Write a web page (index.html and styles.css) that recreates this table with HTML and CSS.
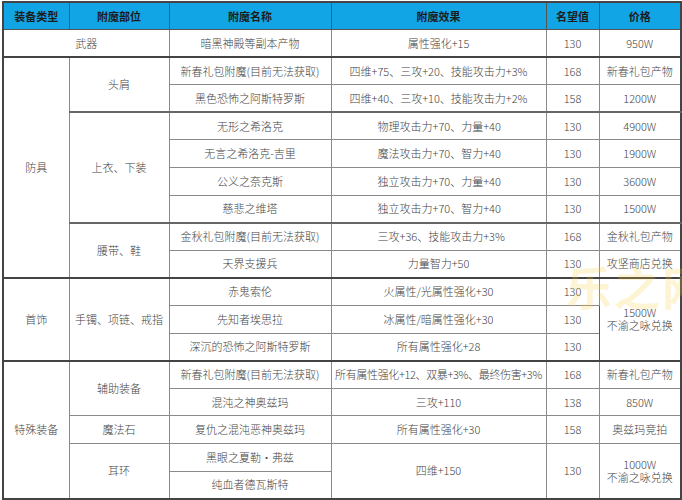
FILE: index.html
```html
<!DOCTYPE html>
<html>
<head>
<meta charset="utf-8">
<link rel="stylesheet" href="styles.css">
</head>
<body>
<div class="wrap">
<table class="tbl">
  <colgroup>
    <col class="c1"><col class="c2"><col class="c3"><col class="c4"><col class="c5"><col class="c6">
  </colgroup>
  <thead>
    <tr class="head">
      <th>装备类型</th><th>附魔部位</th><th>附魔名称</th><th>附魔效果</th><th>名望值</th><th>价格</th>
    </tr>
  </thead>
  <tbody>
    <tr>
      <td colspan="2">武器</td><td>暗黑神殿等副本产物</td><td>属性强化+15</td><td>130</td><td>950W</td>
    </tr>
    <tr class="grp">
      <td rowspan="8">防具</td><td rowspan="2">头肩</td><td>新春礼包附魔(目前无法获取)</td><td>四维+75、三攻+20、技能攻击力+3%</td><td>168</td><td>新春礼包产物</td>
    </tr>
    <tr>
      <td>黑色恐怖之阿斯特罗斯</td><td>四维+40、三攻+10、技能攻击力+2%</td><td>158</td><td>1200W</td>
    </tr>
    <tr class="sub">
      <td rowspan="4">上衣、下装</td><td>无形之希洛克</td><td class="left">物理攻击力+70、力量+40</td><td>130</td><td>4900W</td>
    </tr>
    <tr>
      <td>无言之希洛克-吉里</td><td class="left">魔法攻击力+70、智力+40</td><td>130</td><td>1900W</td>
    </tr>
    <tr>
      <td>公义之奈克斯</td><td class="left">独立攻击力+70、力量+40</td><td>130</td><td>3600W</td>
    </tr>
    <tr>
      <td>慈悲之维塔</td><td class="left">独立攻击力+70、智力+40</td><td>130</td><td>1500W</td>
    </tr>
    <tr class="sub">
      <td rowspan="2">腰带、鞋</td><td>金秋礼包附魔(目前无法获取)</td><td class="left">三攻+36、技能攻击力+3%</td><td>168</td><td>金秋礼包产物</td>
    </tr>
    <tr>
      <td>天界支援兵</td><td>力量智力+50</td><td>130</td><td>攻坚商店兑换</td>
    </tr>
    <tr class="grp">
      <td rowspan="3">首饰</td><td rowspan="3">手镯、项链、戒指</td><td>赤鬼索伦</td><td>火属性/光属性强化+30</td><td>130</td><td rowspan="3" class="two">1500W<br>不渝之咏兑换</td>
    </tr>
    <tr>
      <td>先知者埃思拉</td><td>冰属性/暗属性强化+30</td><td>130</td>
    </tr>
    <tr>
      <td>深沉的恐怖之阿斯特罗斯</td><td>所有属性强化+28</td><td>130</td>
    </tr>
    <tr class="grp">
      <td rowspan="5">特殊装备</td><td rowspan="2">辅助装备</td><td>新春礼包附魔(目前无法获取)</td><td class="tight">所有属性强化+12、双暴+3%、最终伤害+3%</td><td>168</td><td>新春礼包产物</td>
    </tr>
    <tr>
      <td>混沌之神奥兹玛</td><td>三攻+110</td><td>138</td><td>850W</td>
    </tr>
    <tr>
      <td>魔法石</td><td>复仇之混沌恶神奥兹玛</td><td>所有属性强化+30</td><td>158</td><td>奥兹玛竞拍</td>
    </tr>
    <tr>
      <td rowspan="2">耳环</td><td>黑眼之夏勒・弗兹</td><td rowspan="2">四维+150</td><td rowspan="2">130</td><td rowspan="2" class="two">1000W<br>不渝之咏兑换</td>
    </tr>
    <tr>
      <td>纯血者德瓦斯特</td>
    </tr>
  </tbody>
</table>
<div class="mark">乐之网</div>
</div>
</body>
</html>
```

FILE: styles.css
```css
html, body {
  margin: 0;
  padding: 0;
  background: #ffffff;
}
.wrap {
  position: relative;
  width: 682px;
  height: 500px;
  overflow: hidden;
  padding: 1px 0 0 2px;
  box-sizing: border-box;
}
.tbl {
  border-collapse: collapse;
  table-layout: fixed;
  width: 678px;
  font-family: "Noto Sans CJK SC", "Microsoft YaHei", sans-serif;
  font-size: 11px;
  font-weight: 300;
  color: #444;
  border: 2px solid #444;
}
.c1 { width: 66px; }
.c2 { width: 100px; }
.c3 { width: 162px; }
.c4 { width: 215px; }
.c5 { width: 53px; }
.c6 { width: 82px; }
.tbl th, .tbl td {
  border: 1px solid #8a8a8a;
  text-align: center;
  vertical-align: middle;
  padding: 0;
  line-height: 13px;
  white-space: nowrap;
  overflow: hidden;
}
.tbl td:nth-last-child(1), .tbl td:nth-last-child(2) {
  border-left-color: #555;
}
.head th {
  height: 26px;
  background: #12a5e6;
  color: #1c1c1c;
  font-weight: bold;
  border-color: #555;
}
.tbl tbody tr {
  height: 27.6px;
}
.grp td {
  border-top: 2px solid #444;
}
.sub td {
  border-top: 2px solid #666;
}
.left {
  text-align: left !important;
  padding-left: 46px !important;
}
.tight {
  letter-spacing: -0.35px;
}
.two {
  line-height: 14px;
}
.mark {
  position: absolute;
  left: 566px;
  top: 252px;
  font-family: "Noto Sans CJK SC", sans-serif;
  font-size: 46px;
  font-weight: bold;
  color: rgba(250, 205, 60, 0.22);
  letter-spacing: 2px;
  pointer-events: none;
  white-space: nowrap;
}
```
